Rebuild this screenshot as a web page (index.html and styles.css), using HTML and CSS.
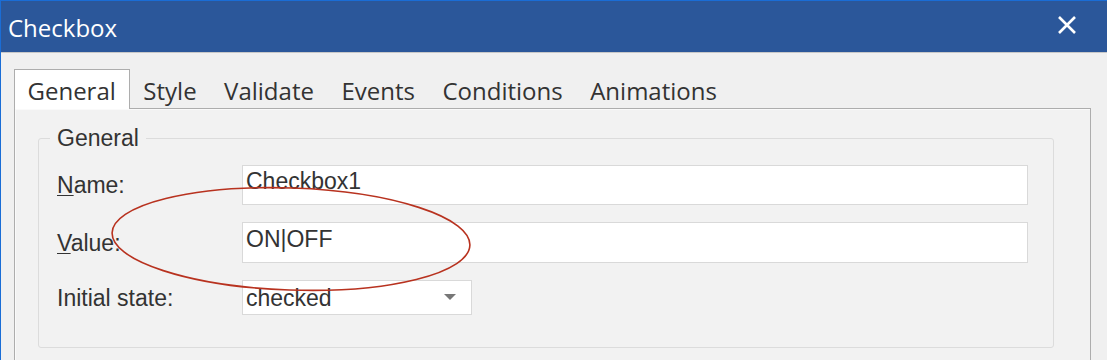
FILE: index.html
```html
<!DOCTYPE html>
<html lang="en">
<head>
    <meta charset="UTF-8">
    <title>Checkbox</title>
    <link rel="stylesheet" href="styles.css">
</head>
<body>
    <div id="window">
        <div class="titlebar">
            <span class="title">Checkbox</span>
            <span class="close">
                <svg width="20" height="20" viewBox="0 0 20 20">
                    <path d="M2 2 L18 18 M18 2 L2 18" stroke="#fff" stroke-width="2.6" fill="none"/>
                </svg>
            </span>
        </div>

        <div class="content">
            <div class="tabs">
                <div class="tab active">General</div>
                <div class="tab">Style</div>
                <div class="tab">Validate</div>
                <div class="tab">Events</div>
                <div class="tab">Conditions</div>
                <div class="tab">Animations</div>
            </div>

            <div class="panel">
                <fieldset class="group">
                    <legend>General</legend>
                    <div class="form">
                        <label><u>N</u>ame:</label>
                        <div class="field field-name">Checkbox1</div>

                        <label><u>V</u>alue:</label>
                        <div class="field field-value">ON|OFF</div>

                        <label>Initial state:</label>
                        <div class="field select">
                            <span>checked</span>
                            <svg width="12" height="7" viewBox="0 0 12 7">
                                <path d="M0 0 L12 0 L6 6 Z" fill="#777"/>
                            </svg>
                        </div>
                    </div>
                </fieldset>
            </div>
        </div>

        <!-- red mark drawn over the form -->
        <svg class="mark" width="1107" height="360" viewBox="0 0 1107 360">
            <ellipse cx="291" cy="239" rx="179" ry="51" transform="rotate(2 291 239)"
                     fill="none" stroke="#b8321f" stroke-width="1.6"/>
        </svg>
    </div>
</body>
</html>
```

FILE: styles.css
```css
body {
    margin: 0;
    background-color: #f0f0f0;
    overflow: hidden;
}

#window {
    position: relative;
    width: 1106px;
    height: 360px;
    border-left: 1px solid #1a6dd6;
    overflow: hidden;
}

.titlebar {
    display: flex;
    height: 51px;
    border-top: 1px solid #1a6dd6;
    background-color: #2b579a;
    box-shadow: 0 1px 0 #c8c8c8;
}

.title {
    font-family: "Open Sans", sans-serif;
    font-size: 24px;
    line-height: 33px;
    color: #fff;
    padding: 10px 0 0 7px;
}

.close {
    margin-left: auto;
    margin-right: 30px;
    padding-top: 14px;
}

.content {
    padding: 17px 0 0 13px;
}

.tabs {
    display: flex;
    height: 39px;
}

.tab {
    font-family: "Open Sans", sans-serif;
    font-size: 24px;
    line-height: 32px;
    color: #333;
    padding: 5px 13px 0 12.5px;
    border: 1px solid transparent;
    border-bottom: none;
}

.tab.active {
    position: relative;
    z-index: 1;
    height: 34px;
    background-color: #fff;
    border-color: #adadad;
}

.panel {
    width: 1077px;
    height: 260px;
    border: 1px solid #adadad;
    background-color: #f2f2f2;
    box-shadow: inset 1px 1px 0 #fafafa;
    padding: 16px 0 0 23px;
    box-sizing: border-box;
}

.group {
    width: 1016px;
    margin: 0;
    padding: 14px 25px 32px 18px;
    border: 1px solid #dcdcdc;
    border-radius: 3px;
    box-sizing: border-box;
    font-family: "Liberation Sans", Arial, sans-serif;
    font-size: 23px;
    color: #333;
}

.group legend {
    padding: 0 7px;
    margin-left: -7px;
    line-height: 26px;
}

.form {
    display: grid;
    grid-template-columns: 185px 1fr;
    grid-template-rows: 40px 41px 35px;
    row-gap: 17px;
    align-items: center;
}

.form label {
    line-height: 26px;
}

.form label u {
    text-decoration-thickness: 1px;
    text-underline-offset: 2px;
}

.field {
    height: 100%;
    box-sizing: border-box;
    background-color: #fff;
    border: 1px solid #d9d9d9;
    padding: 2px 3px 0 3px;
    line-height: 26px;
    color: #333;
}

.field-value {
    padding-top: 3px;
}

.select {
    display: flex;
    align-items: center;
    justify-content: space-between;
    width: 230px;
    padding: 0 15px 0 3px;
}

.mark {
    position: absolute;
    top: 0;
    left: -1px;
    pointer-events: none;
}
```
